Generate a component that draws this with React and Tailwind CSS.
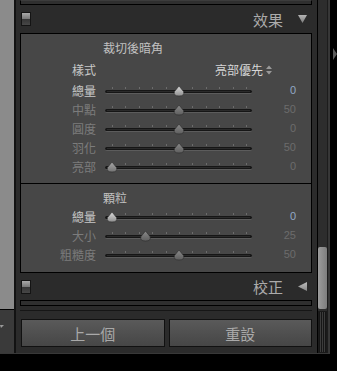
import React from 'react'

const cjk = "font-['Noto_Sans_CJK_TC','Noto_Sans',sans-serif]"

function Toggle() {
  return (
    <div className="w-[10px] h-[14px] border border-[#141414] flex flex-col">
      <div className="h-[6px] bg-gradient-to-b from-[#a8a8a8] to-[#767676]" />
      <div className="flex-1 bg-gradient-to-b from-[#353535] to-[#474747]" />
    </div>
  )
}

function Slider({ pos, tone }) {
  const ticks = Array.from({ length: 11 }, (_, i) => Math.round(7 + i * 13.4))
  const cx = 7 + pos * 134
  const fills = {
    on: ['#dcdcdc', '#8e8e8e'],
    mid: ['#a8a8a8', '#737373'],
    off: ['#8a8a8a', '#5e5e5e'],
  }[tone]
  const id = 'g' + tone
  return (
    <svg width="148" height="14" className="block">
      <defs>
        <linearGradient id={id} x1="0" y1="0" x2="0" y2="1">
          <stop offset="0" stopColor={fills[0]} />
          <stop offset="1" stopColor={fills[1]} />
        </linearGradient>
      </defs>
      {ticks.map((t) => (
        <rect key={t} x={t} y="3" width="1" height="2" fill="#6c6c6c" />
      ))}
      <rect x="0" y="6" width="147" height="4" rx="2" fill="#5c5c5c" />
      <rect x="0" y="6" width="147" height="3" rx="1.5" fill="#161616" />
      <rect x="2" y="7" width="143" height="1" fill="#2a2a2a" />
      <path
        d={`M${cx} 2 L${cx + 4.5} 7.5 Q${cx + 6} 12 ${cx} 12 Q${cx - 6} 12 ${cx - 4.5} 7.5 Z`}
        fill={`url(#${id})`}
        stroke="#2a2a2a"
        strokeWidth="0.6"
      />
    </svg>
  )
}

function Row({ label, pos, value, labelOn, tone, valueOn }) {
  return (
    <div className="h-[19px] flex items-center">
      <div
        className={`w-[75px] text-right text-[12px] leading-none ${
          labelOn ? 'text-[#c8c8c8]' : 'text-[#7c7c7c]'
        }`}
      >
        {label}
      </div>
      <div className="ml-[9px]">
        <Slider pos={pos} tone={tone} />
      </div>
      <div
        className={`w-[43px] text-right text-[11px] leading-none font-['Liberation_Sans',sans-serif] ${
          valueOn ? 'text-[#92a8c4]' : 'text-[#6c6c6c]'
        }`}
      >
        {value}
      </div>
    </div>
  )
}

function Header({ title, dir }) {
  return (
    <div className="flex items-center">
      <div className="ml-[1px]">
        <Toggle />
      </div>
      <div className="flex-1" />
      <span className="text-[15px] leading-none text-[#ababab]">{title}</span>
      {dir === 'down' ? (
        <svg width="9" height="8" className="ml-[15px] mr-[5px]">
          <defs>
            <linearGradient id="tri" x1="0" y1="0" x2="0" y2="1">
              <stop offset="0" stopColor="#b4b4b4" />
              <stop offset="1" stopColor="#7c7c7c" />
            </linearGradient>
          </defs>
          <path d="M0 0 L9 0 L4.5 8 Z" fill="url(#tri)" />
        </svg>
      ) : (
        <svg width="9" height="9" className="ml-[15px] mr-[5px]">
          <defs>
            <linearGradient id="tri2" x1="0" y1="0" x2="0" y2="1">
              <stop offset="0" stopColor="#bcbcbc" />
              <stop offset="1" stopColor="#868686" />
            </linearGradient>
          </defs>
          <path d="M0 4.5 L9 0 L9 9 Z" fill="url(#tri2)" />
        </svg>
      )}
    </div>
  )
}

export default function App() {
  return (
    <div className={`w-[337px] h-[371px] bg-black overflow-hidden flex items-start ${cjk}`}>
      <div className="w-[330px] h-[354px] flex border-r border-b border-[#383838]">
        {/* left strip */}
        <div className="w-[14px] flex flex-col">
          <div className="h-[310px] bg-[#8b8b8b] border-b border-black" />
          <div className="flex-1 bg-[#3a3a3a] pt-[15px]">
            <svg width="4" height="4" className="block">
              <path d="M0 0 L4 0 L1 3 Z" fill="#9a9a9a" />
            </svg>
          </div>
        </div>
        <div className="w-[2px] bg-[#121212]" />

        {/* panel */}
        <div className="w-[301px] bg-[#2b2b2b] flex flex-col pl-[4px] pr-[5px]">
          <div className="h-[5px] border-x border-b border-black border-t border-t-[#3c3c3c] bg-[#2f2f2f]" />
          <div className="h-[28px] flex flex-col justify-center">
            <Header title="效果" dir="down" />
          </div>

          <div className="h-[240px] border border-black bg-[#474747] flex flex-col">
            <div className="h-[150px] border-b border-black pt-[6px]">
              <div className="h-[16px] pl-[82px] text-[12px] leading-[16px] text-[#c2c2c2]">
                裁切後暗角
              </div>
              <div className="mt-[4px] h-[19px] flex items-center">
                <div className="w-[75px] text-right text-[12px] leading-none text-[#c8c8c8]">
                  樣式
                </div>
                <div className="flex-1 flex items-center justify-end pr-[39px]">
                  <span className="text-[12px] leading-none text-[#d6d6d6]">亮部優先</span>
                  <svg width="6" height="10" className="ml-[3px]">
                    <path d="M0 4 L3 0.5 L6 4 Z" fill="#9a9a9a" />
                    <path d="M0 6 L3 9.5 L6 6 Z" fill="#9a9a9a" />
                  </svg>
                </div>
              </div>
              <div className="mt-[2px]">
                <Row label="總量" pos={0.5} value="0" labelOn tone="on" valueOn />
                <Row label="中點" pos={0.5} value="50" tone="off" />
                <Row label="圓度" pos={0.5} value="0" tone="off" />
                <Row label="羽化" pos={0.5} value="50" tone="off" />
                <Row label="亮部" pos={0} value="0" tone="mid" />
              </div>
            </div>
            <div className="flex-1 pt-[6px]">
              <div className="h-[16px] pl-[82px] text-[12px] leading-[16px] text-[#c2c2c2]">
                顆粒
              </div>
              <div className="mt-[1px]">
                <Row label="總量" pos={0} value="0" labelOn tone="on" valueOn />
                <Row label="大小" pos={0.25} value="25" tone="off" />
                <Row label="粗糙度" pos={0.5} value="50" tone="off" />
              </div>
            </div>
          </div>

          <div className="h-[27px] flex flex-col justify-center">
            <Header title="校正" dir="left" />
          </div>
          <div className="h-[6px] border border-black bg-[#2f2f2f]" />
          <div className="mt-[4px] h-[1px] bg-[#161616]" />

          <div className="mt-[8px] pl-[1px] grid grid-cols-2 gap-[4px]">
            {['上一個', '重設'].map((t) => (
              <div
                key={t}
                className="h-[28px] border border-[#111] bg-gradient-to-b from-[#5a5a5a] to-[#464646] flex items-center justify-center text-[15px] leading-none text-[#a9a9a9]"
              >
                {t}
              </div>
            ))}
          </div>
        </div>

        {/* scrollbar */}
        <div className="w-[12px] flex">
          <div className="w-[1px] bg-black" />
          <div className="w-[9px] flex flex-col bg-[#2d2d2d]">
            <div className="flex-1" />
            <div className="h-[62px] rounded-[2px] bg-gradient-to-r from-[#9c9c9c] to-[#7e7e7e]" />
            <div className="h-[2px]" />
            <div className="h-[42px] border border-[#1a1a1a] bg-[repeating-linear-gradient(90deg,#161616_0_1px,#3c3c3c_1px_2px)]" />
          </div>
          <div className="w-[1px] bg-[#1c1c1c]" />
          <div className="w-[1px] bg-[#363636]" />
        </div>
      </div>

      <div className="w-[7px] pt-[48px] pl-[3px]">
        <svg width="4" height="12" className="block">
          <path d="M0 0 L4 6 L0 12 Z" fill="#5c5c5c" />
        </svg>
      </div>
    </div>
  )
}
